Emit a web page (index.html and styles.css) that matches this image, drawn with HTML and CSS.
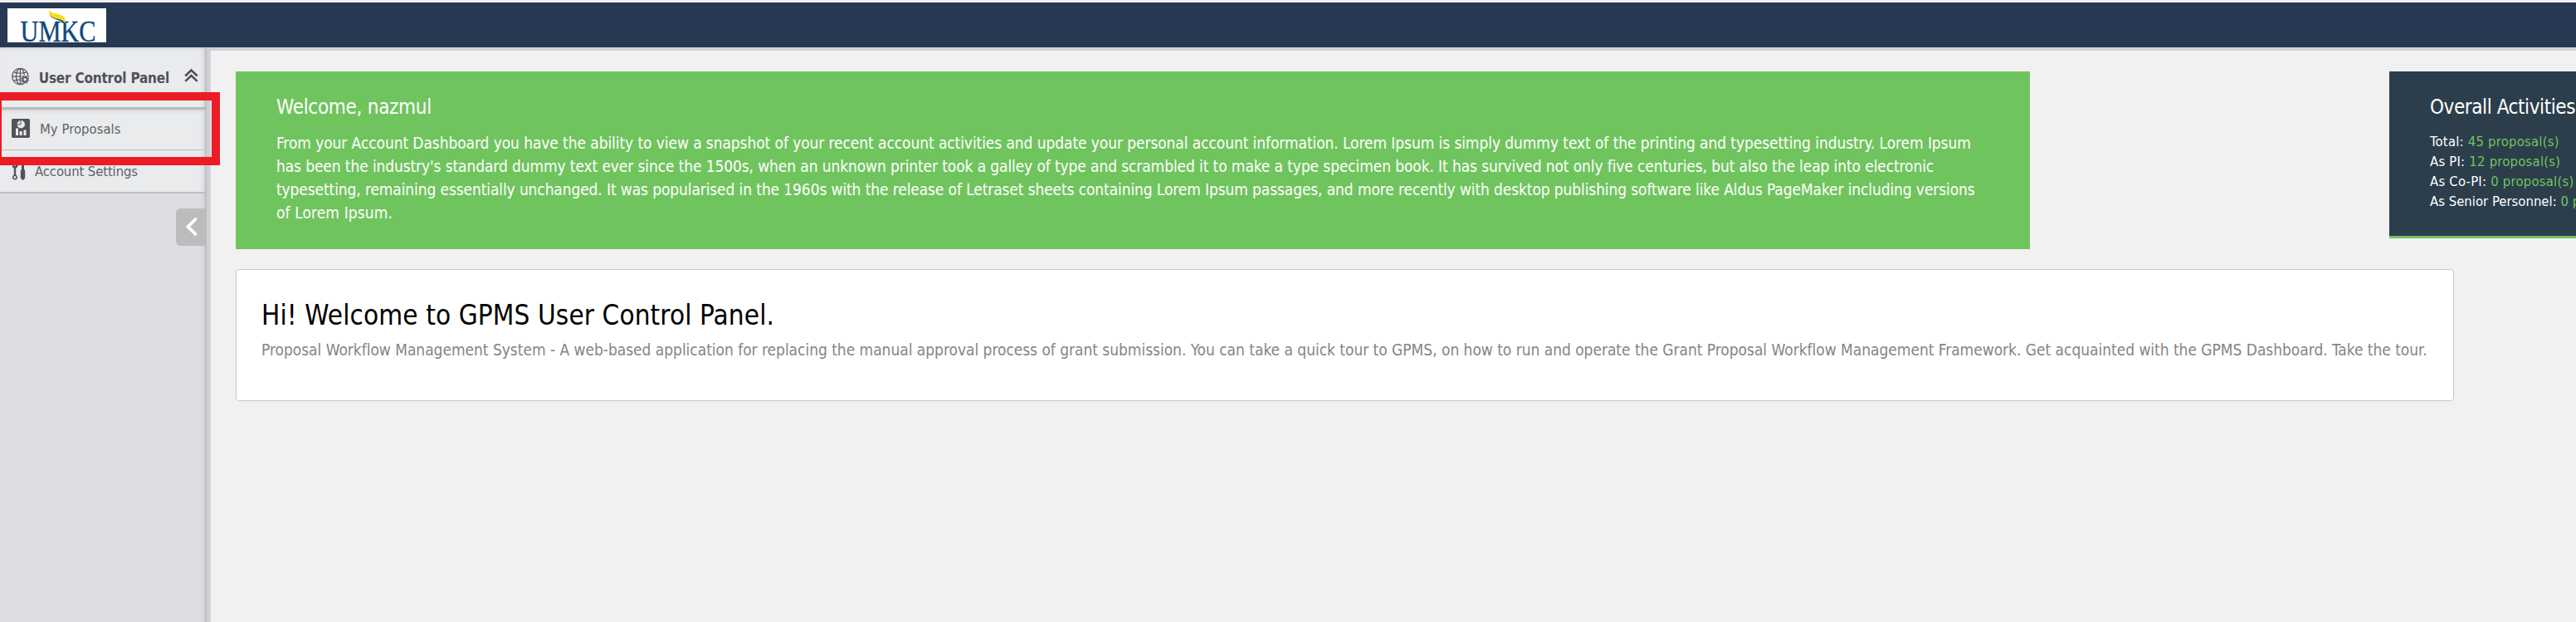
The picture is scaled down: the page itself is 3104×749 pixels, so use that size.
FILE: index.html
```
<!DOCTYPE html>
<html lang="en">
<head>
<meta charset="utf-8">
<title>GPMS User Control Panel</title>
<link rel="stylesheet" href="styles.css">
</head>
<body>
<header class="topbar">
  <svg class="logo" width="119" height="41" viewBox="9 10 119 41" role="img" aria-label="UMKC">
    <rect x="9" y="10" width="119" height="41" fill="#fff"/>
    <text class="logo-text" x="24.5" y="49.6" textLength="91" lengthAdjust="spacingAndGlyphs">UMKC</text>
    <path d="M60 17C61 25 76 22 78.500 31C79.500 26 77 23 73 21C67 19 61 19 60 17Z" fill="#11477f"/>
    <path d="M59.300 11.500C61 16 65 15.500 70 17C77 19 80 22 78.500 28C75 22.500 70 23.500 65 21.500C60 19.500 58.500 16.500 59.300 11.500Z" fill="#f5dc1d"/>
  </svg>
</header>
<div class="shell">
  <aside class="sidebar">
    <nav class="menu">
      <div class="menu-head">
        <svg class="icon-globe" width="23" height="23" viewBox="0 0 23 23" fill="none" stroke="#57595e" stroke-width="1.300">
          <circle cx="11" cy="11" r="10.300"/>
          <ellipse cx="11" cy="11" rx="5.300" ry="10"/>
          <path d="M11 1V21M1 11H21M3 5.500Q11 8.500 19 5.500M3 16.500Q11 13.500 19 16.500"/>
          <circle cx="17" cy="15" r="5.300" fill="#e9ebed" stroke="none"/>
          <circle cx="17" cy="15" r="4.300" stroke-width="1.700" stroke-dasharray="2 1.380"/>
          <circle cx="17" cy="15" r="2.900" stroke-width="2"/>
        </svg>
        <span class="menu-title">User Control Panel</span>
        <svg class="icon-collapse" width="18" height="18" viewBox="0 0 18 18" fill="none" stroke="#4f5156" stroke-width="2.700">
          <path d="M1.300 9.500L9 2.200L16.700 9.500M1.300 16.300L9 9L16.700 16.300"/>
        </svg>
      </div>
      <a class="menu-item proposals">
        <svg width="22" height="23" viewBox="0 0 22 23">
          <rect width="22" height="23" rx="1.800" fill="#515358"/>
          <circle cx="11.300" cy="6.800" r="4.700" fill="#e9ebed"/>
          <path d="M11 2V6.800H6.800" fill="none" stroke="#515358"/>
          <path d="M5 11.500H8V20H5ZM9.600 15H12.600V20H9.600ZM14.500 13.500H17.500V20H14.500Z" fill="#e9ebed"/>
        </svg>
        <span>My Proposals</span>
      </a>
      <a class="menu-item settings">
        <svg width="16" height="22" viewBox="0 0 16 22" fill="none" stroke="#515358">
          <path d="M0 2Q0 6 3 6.500Q6 6 6 2M3 6.500V16" stroke-width="2.400"/>
          <circle cx="3" cy="18.500" r="2.200" stroke-width="1.500"/>
          <path d="M12.500 1V10" stroke-width="3"/>
          <path d="M12.500 9.500V20" stroke-width="5.400"/>
          <path d="M11 20.500H14" stroke-width="2"/>
        </svg>
        <span>Account Settings</span>
      </a>
    </nav>
    <button class="toggle" aria-label="Collapse sidebar">
      <svg width="16" height="24" viewBox="0 0 16 24" fill="none" stroke="#fff" stroke-width="3.800" stroke-linecap="round" stroke-linejoin="miter"><path d="M12.500 3L3.500 12L12.500 21"/></svg>
    </button>
  </aside>
  <main class="content">
    <div class="cards">
      <section class="welcome">
        <h2>Welcome, nazmul</h2>
        <p>
          <span class="line l1">From your Account Dashboard you have the ability to view a snapshot of your recent account activities and update your personal account information. Lorem Ipsum is simply dummy text of the printing and typesetting industry. Lorem Ipsum</span>
          <span class="line l2">has been the industry's standard dummy text ever since the 1500s, when an unknown printer took a galley of type and scrambled it to make a type specimen book. It has survived not only five centuries, but also the leap into electronic</span>
          <span class="line l3">typesetting, remaining essentially unchanged. It was popularised in the 1960s with the release of Letraset sheets containing Lorem Ipsum passages, and more recently with desktop publishing software like Aldus PageMaker including versions</span>
          <span class="line l4">of Lorem Ipsum.</span>
        </p>
      </section>
      <section class="activities">
        <h2>Overall Activities</h2>
        <ul>
          <li>Total: <b>45 proposal(s)</b></li>
          <li>As PI: <b>12 proposal(s)</b></li>
          <li>As Co-PI: <b>0 proposal(s)</b></li>
          <li class="senior">As Senior Personnel: <b>0 proposal(s)</b></li>
        </ul>
      </section>
    </div>
    <section class="intro">
      <h1>Hi! Welcome to GPMS User Control Panel.</h1>
      <p>Proposal Workflow Management System - A web-based application for replacing the manual approval process of grant submission. You can take a quick tour to GPMS, on how to run and operate the Grant Proposal Workflow Management Framework. Get acquainted with the GPMS Dashboard. Take the tour.</p>
    </section>
  </main>
</div>
<div class="highlight"></div>
</body>
</html>
```
FILE: styles.css
```
* { box-sizing: border-box; }
body {
  margin: 0;
  height: 749px;
  display: flex;
  flex-direction: column;
  overflow: hidden;
  position: relative;
  background: #f1f1f1;
  font-family: "DejaVu Sans Condensed", "DejaVu Sans", Tahoma, sans-serif;
}
h1, h2, p, ul { margin: 0; padding: 0; font-weight: 400; }

.topbar {
  flex: none;
  height: 57px;
  padding: 7px 9px 0;
  border-top: 3px solid #eef0f5;
  background: #273852;
}
.logo { display: block; overflow: visible; }
.logo-text { font-family: "Liberation Serif", serif; font-size: 36px; fill: #11477f; stroke: #11477f; stroke-width: .4px; }

.shell { flex: 1; display: flex; min-height: 0; }

/* Sidebar */
.sidebar {
  flex: none;
  width: 254px;
  display: flex;
  flex-direction: column;
  border-right: 5px solid #d0d1d8;
  background: linear-gradient(to left, #b5b7bd 0, #c8cacf 2px, #d7d9dc 4px, #dcdee1 9px);
}
.menu {
  background: linear-gradient(to left, #b5b7bd 0, #cccdd1 2px, #dfe1e3 4px, #e9ebed 9px);
  border-bottom: 2px solid #bcbec1;
  color: #606266;
  font-size: 16.5px;
}
.menu-head {
  height: 75px;
  display: flex;
  align-items: center;
  padding: 0 10px 0 14px;
  border-bottom: 3px solid #b8babc;
  box-shadow: inset 0 5px 5px -4px #c9cacf;
}
.icon-globe { margin-bottom: 2px; }
.menu-title { margin: 2px 0 0 11px; font-size: 17px; font-weight: 700; letter-spacing: -.2px; color: #505257; white-space: nowrap; }
.icon-collapse { margin: 0 0 4px 18px; }
.menu-item { display: flex; align-items: center; padding-left: 14px; }
.proposals { height: 49px; border-bottom: 1px solid #bcbec1; box-shadow: inset 0 4px 4px -3px #c9cbcd; }
.proposals span { margin: 0 0 2px 12px; letter-spacing: .05px; }
.proposals svg { margin-bottom: 4px; }
.settings { height: 50px; letter-spacing: -.1px; }
.settings svg { margin-left: 1px; }
.settings span { margin: 1px 0 0 11px; }
.toggle {
  align-self: flex-end;
  width: 37px;
  height: 45px;
  margin-top: 18px;
  padding: 0 0 1px 1px;
  display: flex;
  align-items: center;
  justify-content: center;
  border: 0;
  border-radius: 6px 0 0 6px;
  background: #bcbcbc;
}

/* Content */
.content {
  flex: 1;
  min-width: 0;
  padding: 25px 0 0 30px;
  border-top: 4px solid #d0d1d8;
}
.cards { display: flex; align-items: flex-start; gap: 433px; }
h2 { font-size: 24px; line-height: 28px; }
.welcome {
  flex: none;
  width: 2162px;
  height: 214px;
  padding: 29px 49px 0;
  background: #70c45e;
  color: #fff;
}
.welcome h2 { letter-spacing: -.29px; }
.welcome p { margin-top: 15px; font-size: 19px; line-height: 28px; }
.line { display: block; white-space: nowrap; }
.l1 { letter-spacing: -.083px; }
.l2 { letter-spacing: -.108px; }
.l3 { letter-spacing: -.108px; }
.l4 { letter-spacing: .1px; }
.activities {
  flex: none;
  width: 360px;
  height: 201px;
  padding: 29px 49px 0;
  background: #2c3e4c;
  border-bottom: 3px solid #70c45e;
  color: #fff;
  white-space: nowrap;
}
.activities h2 { letter-spacing: -.415px; }
.activities ul { margin-top: 16px; list-style: none; font-size: 16.5px; line-height: 24px; letter-spacing: .24px; }
.activities .senior { letter-spacing: .03px; }
.activities b { font-weight: 400; color: #70c45e; }
.intro {
  width: 2673px;
  height: 159px;
  margin-top: 24px;
  padding: 35px 30px 0;
  border: 1px solid #c9c9c9;
  border-radius: 4px;
  background: #fff;
  white-space: nowrap;
}
.intro h1 { font-size: 33px; line-height: 40px; letter-spacing: .1px; color: #000; }
.intro p { margin-top: 7px; font-size: 19px; line-height: 28px; letter-spacing: -.028px; color: #858585; }

/* Callout frame over the My Proposals entry */
.highlight {
  position: absolute;
  left: 0;
  top: 111px;
  width: 265px;
  height: 88px;
  border: 10px solid #ec1c24;
  border-left-width: 2px;
}
```
